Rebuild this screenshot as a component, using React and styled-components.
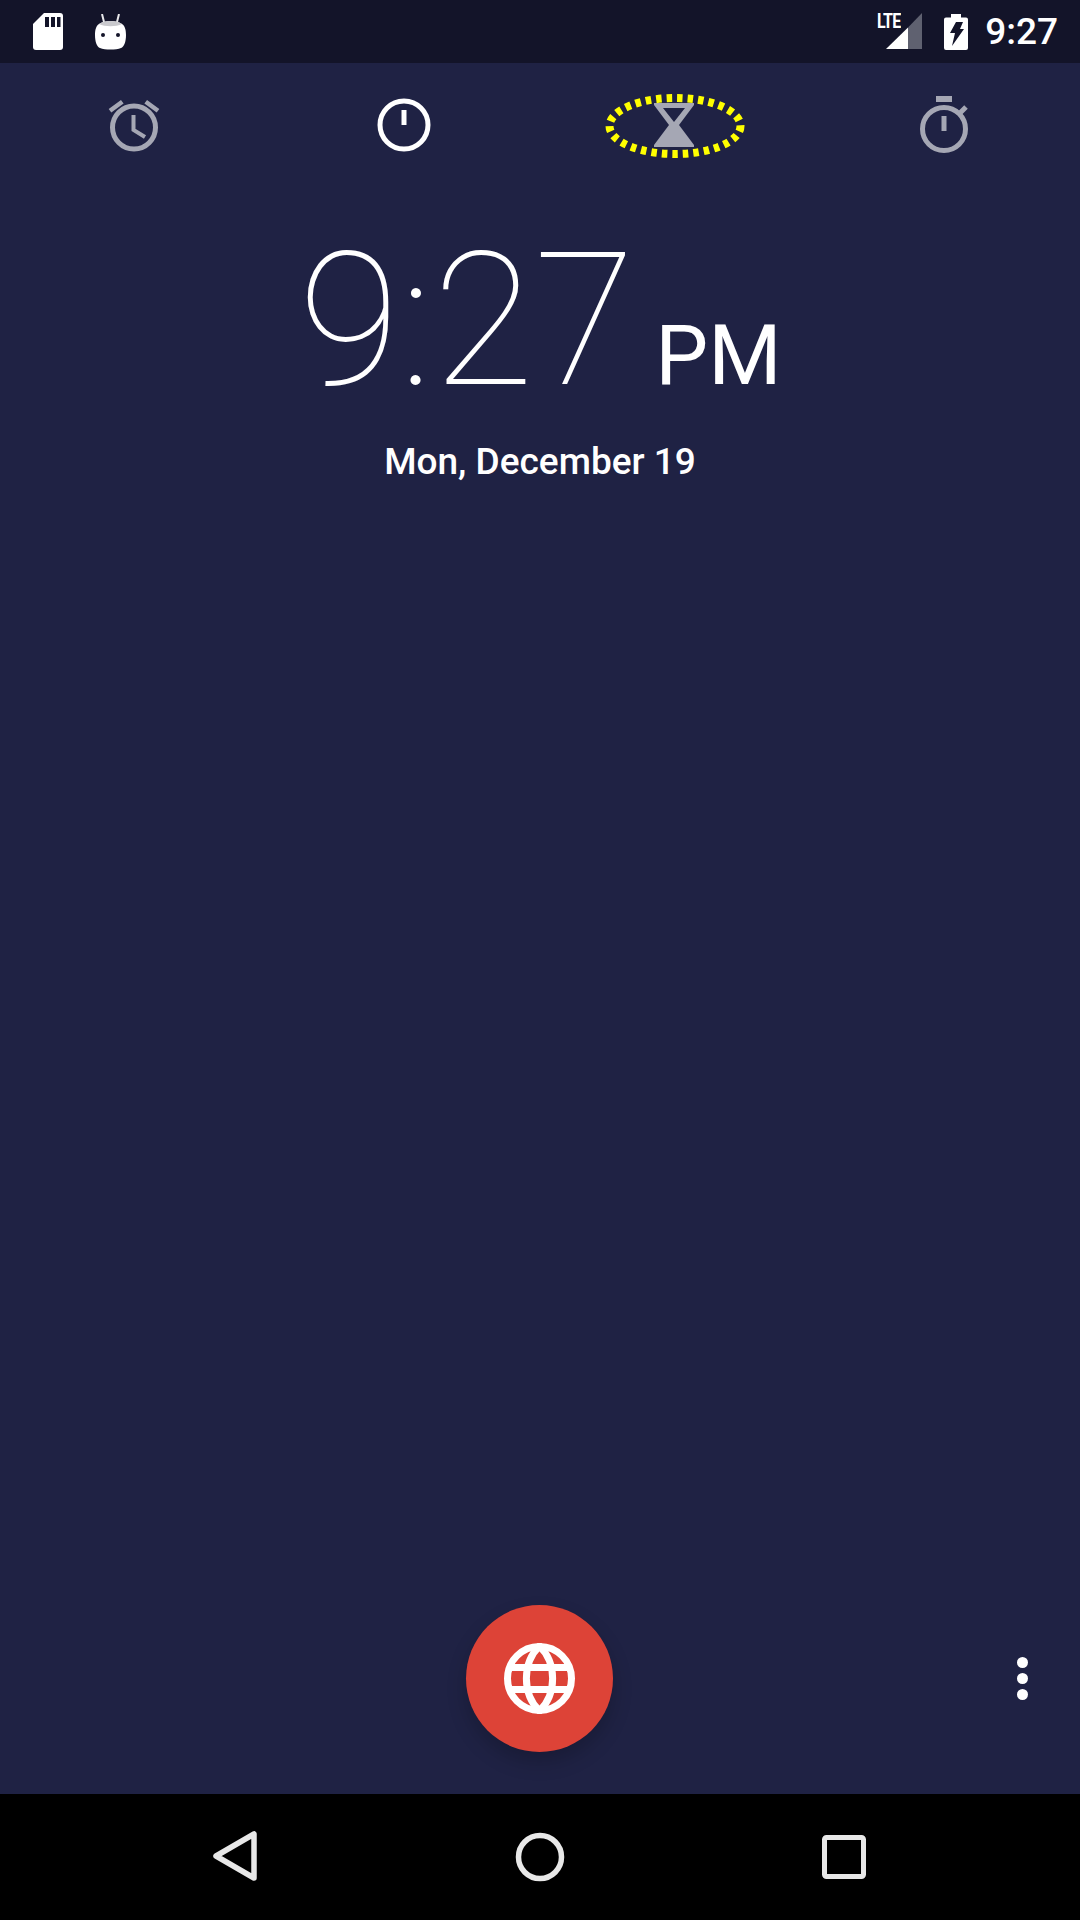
import React from "react";
import styled, { createGlobalStyle } from "styled-components";

const GlobalStyle = createGlobalStyle`
  html, body { margin: 0; padding: 0; background: #1f2244; }
  * { box-sizing: border-box; }
`;

const Screen = styled.div`
  width: 1080px;
  height: 1920px;
  display: flex;
  flex-direction: column;
  background: #1f2244;
  color: #fff;
  font-family: Roboto, "Liberation Sans", sans-serif;
  overflow: hidden;
`;

const StatusBar = styled.div`
  height: 63px;
  flex: none;
  background: #131429;
  display: flex;
  align-items: center;
  justify-content: space-between;
  padding: 0 22px 0 33px;
`;

const StatusGroup = styled.div`
  display: flex;
  align-items: center;
  gap: ${(p) => p.$gap}px;
`;

const SignalWrap = styled.div`
  position: relative;
  width: 46px;
  height: 38px;
  margin-right: 5px;
  display: flex;
  justify-content: flex-end;
`;

const LteLabel = styled.span`
  position: absolute;
  left: 1px;
  top: -2px;
  font-size: 20px;
  line-height: 20px;
  font-weight: 700;
  letter-spacing: -1px;
  transform: scaleX(0.8);
  transform-origin: left center;
`;

const StatusTime = styled.span`
  font-size: 37px;
  font-weight: 500;
  line-height: 63px;
`;

const Tabs = styled.div`
  height: 124px;
  flex: none;
  display: grid;
  grid-template-columns: repeat(4, 270px);
`;

const Tab = styled.div`
  position: relative;
  display: flex;
  align-items: center;
  justify-content: center;
  padding-right: 2px;
  color: ${(p) => (p.$active ? "#ffffff" : "#a5a7b4")};
`;

const TabHighlight = styled.svg`
  position: absolute;
  left: 65px;
  top: 30px;
`;

const ClockBlock = styled.div`
  display: flex;
  flex-direction: column;
  align-items: center;
  padding-top: 34px;
`;

const ClockRow = styled.div`
  display: flex;
  align-items: baseline;
  justify-content: center;
  gap: 20px;
`;

const BigTime = styled.span`
  font-size: 185px;
  font-weight: 100;
  line-height: 200px;
`;

const Meridiem = styled.span`
  font-size: 84px;
  font-weight: 400;
`;

const DateLine = styled.div`
  margin-top: 19px;
  font-size: 37px;
  font-weight: 500;
  line-height: 44px;
`;

const Spacer = styled.div`
  flex: 1;
`;

const ActionRow = styled.div`
  display: grid;
  grid-template-columns: 1fr 147px 1fr;
  align-items: center;
  padding-right: 1px;
  padding-bottom: 42px;
`;

const Fab = styled.div`
  grid-column: 2;
  width: 147px;
  height: 147px;
  border-radius: 50%;
  background: #dd4337;
  box-shadow: 0 10px 20px rgba(0, 0, 0, 0.2);
  display: flex;
  align-items: center;
  justify-content: center;
`;

const MoreButton = styled.div`
  justify-self: end;
  margin-right: 51px;
  display: flex;
  flex-direction: column;
  gap: 5px;
`;

const MoreDot = styled.span`
  width: 11px;
  height: 11px;
  border-radius: 50%;
  background: #fff;
`;

const NavBar = styled.div`
  height: 126px;
  flex: none;
  background: #000;
  display: grid;
  grid-template-columns: repeat(3, 304px);
  justify-content: center;
  align-items: center;
`;

const NavItem = styled.div`
  display: flex;
  justify-content: center;
  align-items: center;
`;

const SdIcon = () => (
  <svg width="30" height="37" viewBox="0 0 30 37">
    <path fill="#fff" d="M11 0h16a3 3 0 0 1 3 3v31a3 3 0 0 1-3 3H3a3 3 0 0 1-3-3V11z" />
    <path fill="#131429" d="M12 4h4v10h-4zM18 4h4v10h-4zM24 4h3.500v10H24z" />
  </svg>
);

const AndroidIcon = () => (
  <svg width="31" height="36" viewBox="0 0 31 36">
    <path stroke="#e8e8ea" strokeWidth="2" d="M7 0l2 8M24 0l-2 8" />
    <path
      fill="#fff"
      d="M4 10C9 6 22 6 27 10c3 2 4 6 4 11 0 7-2 12-5 13-5 2-16 2-21 0-3-1-5-6-5-13 0-5 1-9 4-11z"
    />
    <path fill="#c9c9cd" d="M4 10C9 6 22 6 27 10c-6 3-17 3-23 0z" />
    <circle cx="8" cy="21" r="2" fill="#131429" />
    <circle cx="23" cy="21" r="2" fill="#131429" />
  </svg>
);

const SignalIcon = () => (
  <svg width="36" height="36" viewBox="0 0 36 36">
    <path fill="#fff" d="M0 36L22 14.500V36z" />
    <path fill="#5f6170" d="M22 14.500L36 0v36H22z" />
  </svg>
);

const BatteryIcon = () => (
  <svg width="24" height="36" viewBox="0 0 24 36">
    <path fill="#fff" d="M7 0h10v3.500h5a2 2 0 0 1 2 2V34a2 2 0 0 1-2 2H2a2 2 0 0 1-2-2V5.500a2 2 0 0 1 2-2h5z" />
    <path fill="#131429" d="M12 8h7l-3 7h4L8 32l3-13H6z" />
  </svg>
);

const AlarmIcon = () => (
  <svg width="60" height="54" viewBox="0 0 60 54" fill="none" stroke="currentColor">
    <circle cx="30" cy="29.500" r="21.500" strokeWidth="5" />
    <path strokeWidth="4.500" d="M6 12.700L18.300 3.700M54 12.700L41.700 3.700" />
    <path strokeWidth="4" d="M29.500 17v15l11.500 7" />
  </svg>
);

const ClockIcon = () => (
  <svg width="54" height="54" viewBox="0 0 54 54" fill="none" stroke="currentColor">
    <circle cx="27" cy="27" r="24" strokeWidth="5" />
    <path strokeWidth="5" d="M27 12v15" />
  </svg>
);

const HourglassIcon = () => (
  <svg width="42" height="44" viewBox="0 0 42 44">
    <path
      fill="currentColor"
      fillRule="evenodd"
      d="M1 0h40v2l-15 20 15 20v2H1v-2l15-20L1 2zM10 5l11 14L32 5z"
    />
  </svg>
);

const StopwatchIcon = () => (
  <svg width="52" height="58" viewBox="0 0 52 58" fill="none" stroke="currentColor">
    <path fill="currentColor" stroke="none" d="M18 0h16v6H18z" />
    <circle cx="26" cy="33" r="21.500" strokeWidth="5" />
    <path strokeWidth="5" d="M26 20v15M42 17l6-6" />
  </svg>
);

const GlobeIcon = () => (
  <svg width="71" height="71" viewBox="0 0 71 71" fill="none" stroke="#fff" strokeWidth="7">
    <circle cx="35.500" cy="35.500" r="32" />
    <path d="M35.500 3C18 20 18 51 35.500 68 53 51 53 20 35.500 3z" />
    <path d="M4 24.500h63M4 46.500h63" />
  </svg>
);

const BackIcon = () => (
  <svg width="48" height="54" viewBox="0 0 48 54" fill="none">
    <path stroke="#e8e8e8" strokeWidth="5.500" strokeLinejoin="round" d="M42 4v44L4 26z" />
  </svg>
);

const HomeIcon = () => (
  <svg width="50" height="50" viewBox="0 0 50 50" fill="none">
    <circle cx="25" cy="25" r="21.500" stroke="#e8e8e8" strokeWidth="5.500" />
  </svg>
);

const RecentsIcon = () => (
  <svg width="44" height="44" viewBox="0 0 44 44" fill="none">
    <rect x="2.500" y="2.500" width="39" height="39" rx="2" stroke="#e8e8e8" strokeWidth="5" />
  </svg>
);

export default function App() {
  return (
    <Screen>
      <GlobalStyle />
      <StatusBar>
        <StatusGroup $gap={32}>
          <SdIcon />
          <AndroidIcon />
        </StatusGroup>
        <StatusGroup $gap={17}>
          <SignalWrap>
            <LteLabel>LTE</LteLabel>
            <SignalIcon />
          </SignalWrap>
          <BatteryIcon />
          <StatusTime>9:27</StatusTime>
        </StatusGroup>
      </StatusBar>

      <Tabs>
        <Tab>
          <AlarmIcon />
        </Tab>
        <Tab $active>
          <ClockIcon />
        </Tab>
        <Tab>
          <HourglassIcon />
          <TabHighlight width="140" height="66" viewBox="0 0 140 66" fill="none">
            <ellipse cx="70" cy="33" rx="65.500" ry="28" stroke="#ffff00" strokeWidth="8" strokeDasharray="5.500 5" />
          </TabHighlight>
        </Tab>
        <Tab>
          <StopwatchIcon />
        </Tab>
      </Tabs>

      <ClockBlock>
        <ClockRow>
          <BigTime>9:27</BigTime>
          <Meridiem>PM</Meridiem>
        </ClockRow>
        <DateLine>Mon, December 19</DateLine>
      </ClockBlock>

      <Spacer />

      <ActionRow>
        <Fab>
          <GlobeIcon />
        </Fab>
        <MoreButton>
          <MoreDot />
          <MoreDot />
          <MoreDot />
        </MoreButton>
      </ActionRow>

      <NavBar>
        <NavItem>
          <BackIcon />
        </NavItem>
        <NavItem>
          <HomeIcon />
        </NavItem>
        <NavItem>
          <RecentsIcon />
        </NavItem>
      </NavBar>
    </Screen>
  );
}
